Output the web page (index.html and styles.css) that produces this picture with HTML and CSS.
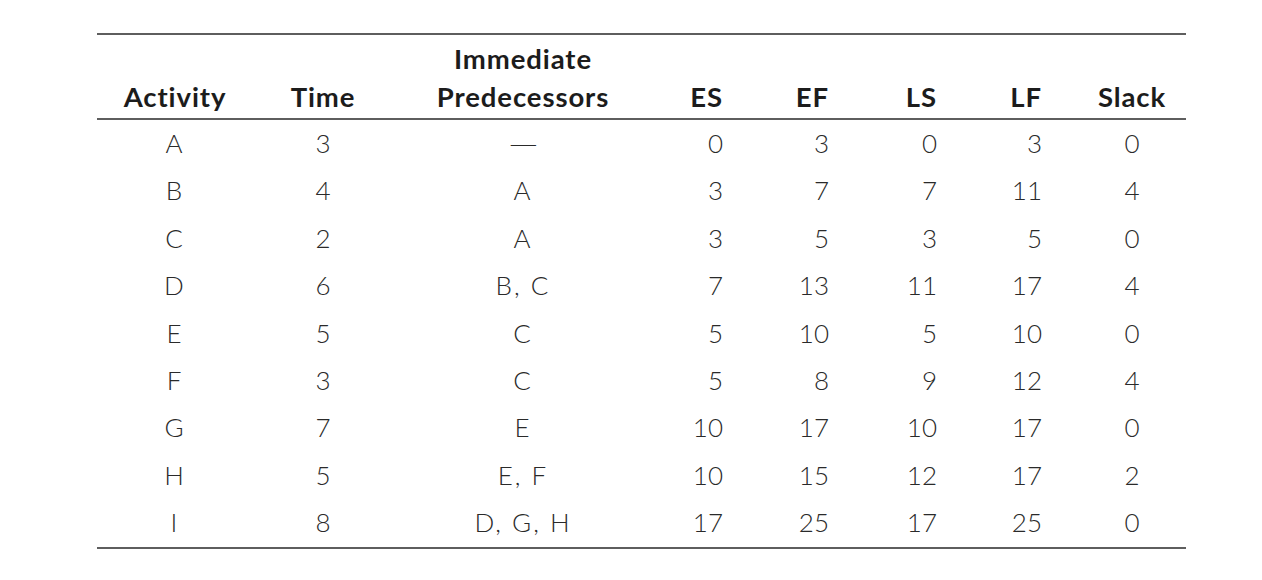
FILE: index.html
```html
<!DOCTYPE html>
<html>
<head>
<meta charset="utf-8">
<link rel="stylesheet" href="styles.css">
</head>
<body>
<table class="cpm">
  <colgroup>
    <col class="c-act"><col class="c-time"><col class="c-pred"><col class="c-es"><col class="c-ef"><col class="c-ls"><col class="c-lf"><col class="c-slack">
  </colgroup>
  <thead>
    <tr>
      <th class="ctr">Activity</th>
      <th class="ctr">Time</th>
      <th class="ctr">Immediate<br>Predecessors</th>
      <th class="num">ES</th>
      <th class="num">EF</th>
      <th class="num">LS</th>
      <th class="num">LF</th>
      <th class="slack">Slack</th>
    </tr>
  </thead>
  <tbody>
    <tr><td class="ctr let">A</td><td class="ctr">3</td><td class="ctr let"><span class="dash">—</span></td><td class="num">0</td><td class="num">3</td><td class="num">0</td><td class="num">3</td><td class="slack">0</td></tr>
    <tr><td class="ctr let">B</td><td class="ctr">4</td><td class="ctr let">A</td><td class="num">3</td><td class="num">7</td><td class="num">7</td><td class="num">11</td><td class="slack">4</td></tr>
    <tr><td class="ctr let">C</td><td class="ctr">2</td><td class="ctr let">A</td><td class="num">3</td><td class="num">5</td><td class="num">3</td><td class="num">5</td><td class="slack">0</td></tr>
    <tr><td class="ctr let">D</td><td class="ctr">6</td><td class="ctr let">B, C</td><td class="num">7</td><td class="num">13</td><td class="num">11</td><td class="num">17</td><td class="slack">4</td></tr>
    <tr><td class="ctr let">E</td><td class="ctr">5</td><td class="ctr let">C</td><td class="num">5</td><td class="num">10</td><td class="num">5</td><td class="num">10</td><td class="slack">0</td></tr>
    <tr><td class="ctr let">F</td><td class="ctr">3</td><td class="ctr let">C</td><td class="num">5</td><td class="num">8</td><td class="num">9</td><td class="num">12</td><td class="slack">4</td></tr>
    <tr><td class="ctr let">G</td><td class="ctr">7</td><td class="ctr let">E</td><td class="num">10</td><td class="num">17</td><td class="num">10</td><td class="num">17</td><td class="slack">0</td></tr>
    <tr><td class="ctr let">H</td><td class="ctr">5</td><td class="ctr let">E, F</td><td class="num">10</td><td class="num">15</td><td class="num">12</td><td class="num">17</td><td class="slack">2</td></tr>
    <tr class="last"><td class="ctr let">I</td><td class="ctr">8</td><td class="ctr let">D, G, H</td><td class="num">17</td><td class="num">25</td><td class="num">17</td><td class="num">25</td><td class="slack">0</td></tr>
  </tbody>
</table>
</body>
</html>
```

FILE: styles.css
```css
html, body {
  margin: 0;
  padding: 0;
  background: #ffffff;
}
body {
  padding-top: 33px;
  font-family: "Lato", "Noto Sans", "Liberation Sans", sans-serif;
}
.cpm {
  margin-left: 97px;
  width: 1089px;
  table-layout: fixed;
  border-collapse: separate;
  border-spacing: 0;
  font-size: 26px;
}
.c-act { width: 156px; }
.c-time { width: 140px; }
.c-pred { width: 260px; }
.c-es { width: 80px; }
.c-ef { width: 106px; }
.c-ls { width: 108px; }
.c-lf { width: 105px; }
.c-slack { width: 134px; }

.cpm th {
  font-size: 27.5px;
  font-weight: 700;
  letter-spacing: 0.9px;
  color: #1c1c1c;
  line-height: 38px;
  padding: 5px 0 2px 0;
  border-top: 2px solid #5e5e5e;
  border-bottom: 2px solid #5e5e5e;
  vertical-align: bottom;
  white-space: nowrap;
}
.cpm td {
  font-weight: 300;
  color: #2a2a2a;
  height: 47.4px;
  line-height: 47.4px;
  padding: 0;
  vertical-align: middle;
}
.cpm .last td {
  border-bottom: 2px solid #5e5e5e;
}
.ctr { text-align: center; }
.let { letter-spacing: 2px; }
.dash {
  display: inline-block;
  letter-spacing: 0;
  transform: scaleX(1.5);
}
.cpm th.num, .cpm td.num { text-align: right; padding-right: 10px; }
.cpm th.slack, .cpm td.slack { text-align: center; padding-left: 26px; }
```
